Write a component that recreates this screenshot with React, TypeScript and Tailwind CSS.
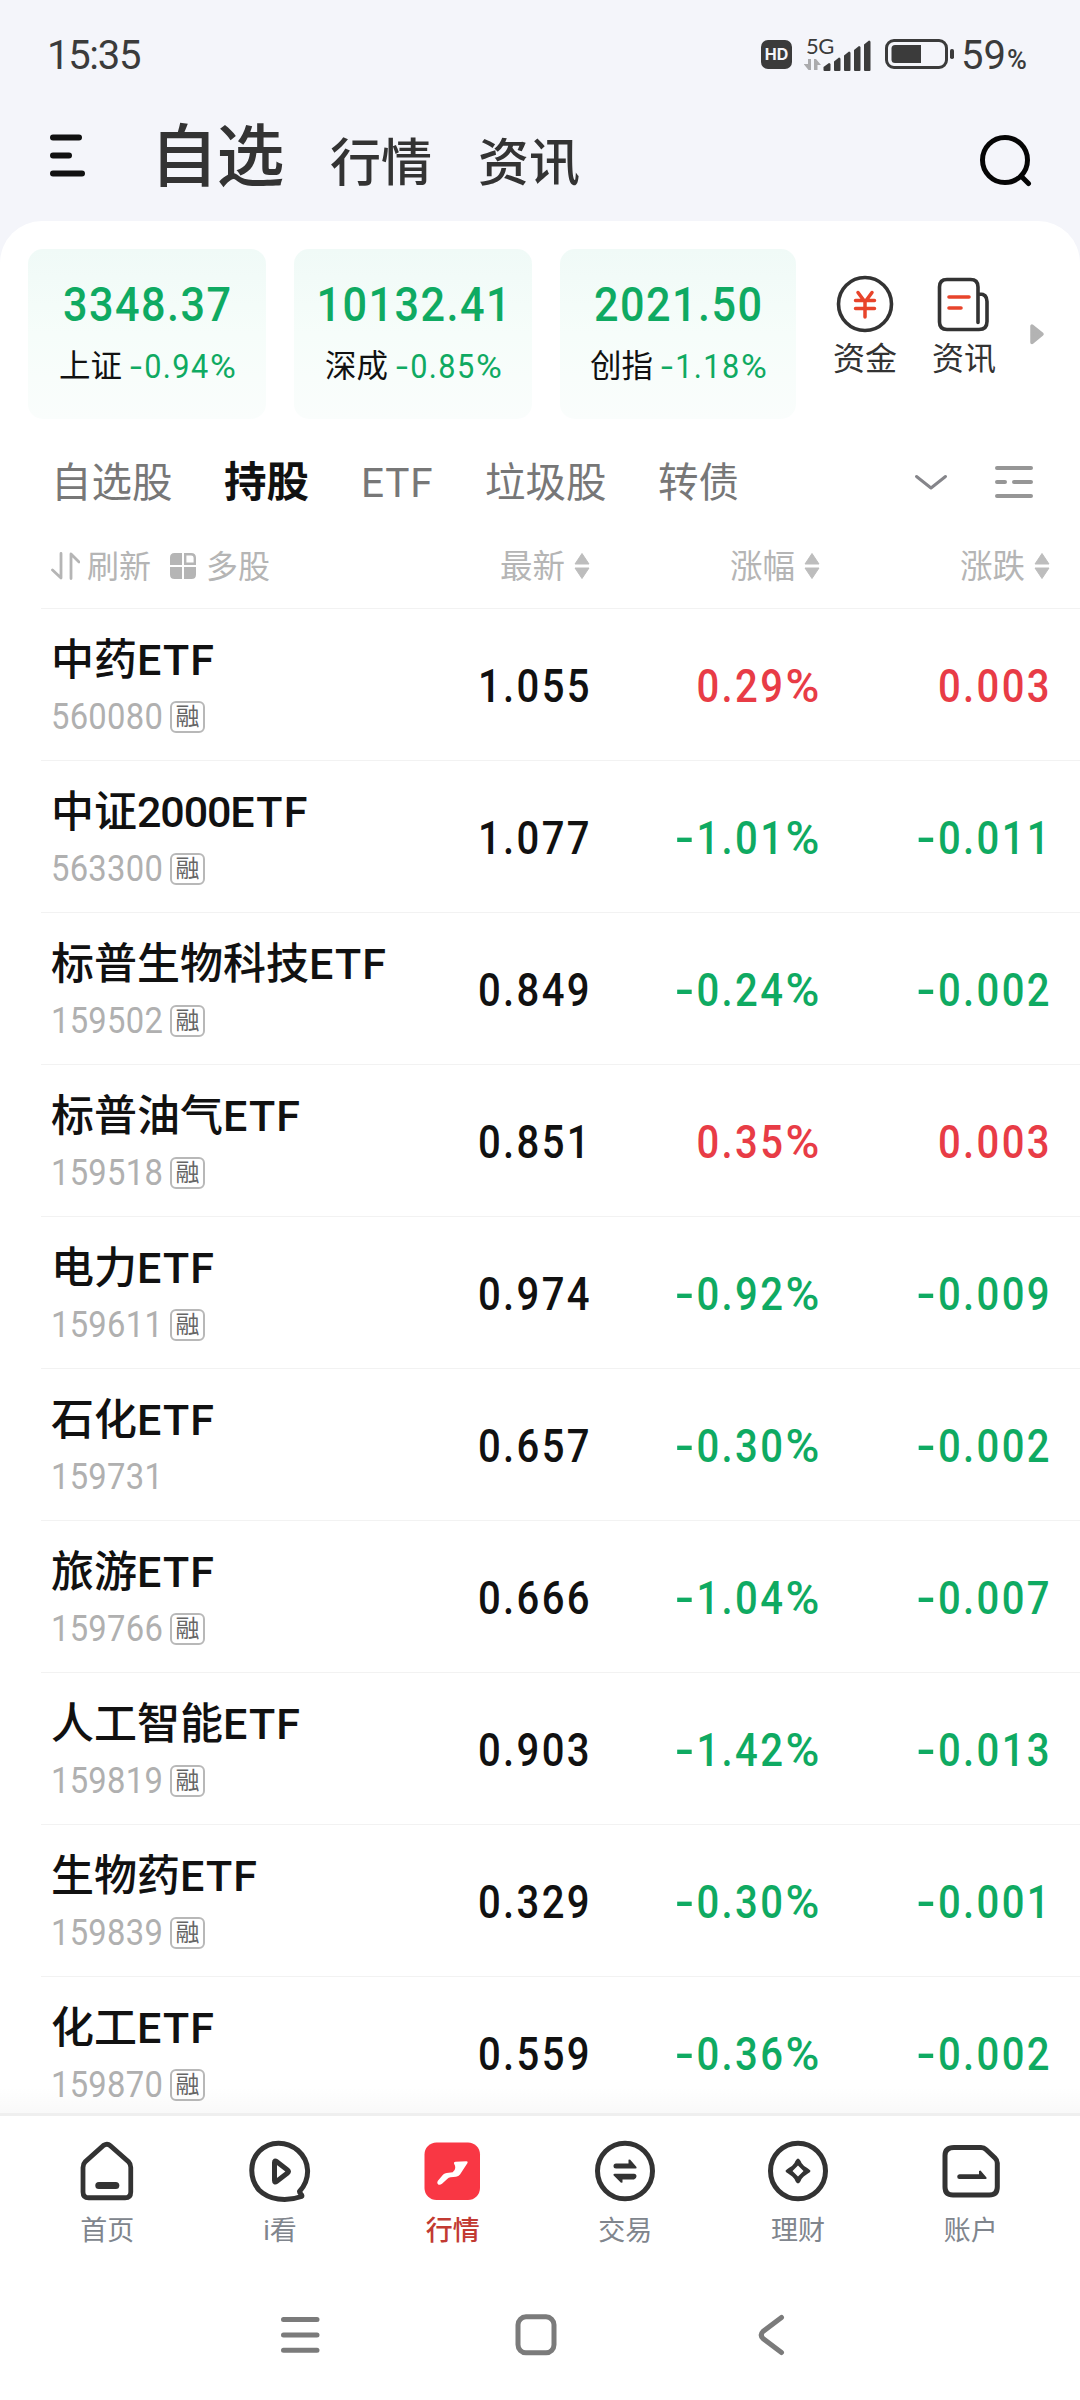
import React from "react";

const rows = [
  { name: "中药", latin: "ETF", code: "560080", margin: true, price: "1.055", pct: "0.29%", chg: "0.003" },
  { name: "中证", digits: "2000", latin: "ETF", code: "563300", margin: true, price: "1.077", pct: "-1.01%", chg: "-0.011" },
  { name: "标普生物科技", latin: "ETF", code: "159502", margin: true, price: "0.849", pct: "-0.24%", chg: "-0.002" },
  { name: "标普油气", latin: "ETF", code: "159518", margin: true, price: "0.851", pct: "0.35%", chg: "0.003" },
  { name: "电力", latin: "ETF", code: "159611", margin: true, price: "0.974", pct: "-0.92%", chg: "-0.009" },
  { name: "石化", latin: "ETF", code: "159731", margin: false, price: "0.657", pct: "-0.30%", chg: "-0.002" },
  { name: "旅游", latin: "ETF", code: "159766", margin: true, price: "0.666", pct: "-1.04%", chg: "-0.007" },
  { name: "人工智能", latin: "ETF", code: "159819", margin: true, price: "0.903", pct: "-1.42%", chg: "-0.013" },
  { name: "生物药", latin: "ETF", code: "159839", margin: true, price: "0.329", pct: "-0.30%", chg: "-0.001" },
  { name: "化工", latin: "ETF", code: "159870", margin: true, price: "0.559", pct: "-0.36%", chg: "-0.002" },
];

/* A figure whose minus and percent signs are drawn a little wider than the font's own. */
function Figure({ value }: { value: string }) {
  const negative = value.startsWith("-");
  const percent = value.endsWith("%");
  const body = value.replace("-", "").replace("%", "");
  return (
    <>
      {negative && <span className="mr-[0.14em] inline-block origin-left scale-x-[1.4]">-</span>}
      {body}
      {percent && <span className="ml-[0.12em] inline-block origin-right scale-x-[1.15]">%</span>}
    </>
  );
}

function StatusBar() {
  return (
    <div className="flex h-[108px] items-center pl-[47px] text-[#3b3b3b]">
      <span className="w-[714px] pt-[3px] text-[40px] leading-none tracking-[-1.300px]">15:35</span>
      <span className="flex h-[29px] w-[31px] items-center justify-center rounded-[7px] bg-[#3b3b3b] font-['Inter'] text-[16px] leading-none font-bold text-[#f4f5fa]">
        HD
      </span>
      <div className="relative ml-[12px] h-[36px] w-[68px]">
        <span className="absolute -top-[1px] left-[2px] font-['Lato'] text-[22px] leading-none tracking-[-0.5px]">5G</span>
        <svg className="absolute inset-0" width="68" height="36" viewBox="804 35 68 36">
          <g fill="#ababad">
            <path d="M808 58h3v11h-2.500l-5-6h4.500z" />
            <path d="M814 69V58h2l5 6h-3.500v5z" />
          </g>
          <g fill="#3b3b3b">
            <path d="M823.500 66l5.500-4q1.500 0 1.500 1.500v5.500q0 1-1 1h-5q-1 0-1-1z" />
            <path d="M834 60.500l5-4q1.500 0 1.500 1.500v11q0 1-1 1h-4.500q-1 0-1-1z" />
            <path d="M844 54.500l5-4q1.500 0 1.500 1.500v17q0 1-1 1h-4.500q-1 0-1-1z" />
            <path d="M854 49l5-4q1.500 0 1.500 1.500v22.500q0 1-1 1h-4.500q-1 0-1-1z" />
            <path d="M864 43.500l5-4q1.500 0 1.500 1.500v28q0 1-1 1h-4.500q-1 0-1-1z" />
          </g>
        </svg>
      </div>
      <svg className="ml-[13px]" width="70" height="32" viewBox="885 38 70 32">
        <rect x="886.500" y="40.500" width="60" height="27" rx="7.500" fill="none" stroke="#3b3b3b" strokeWidth="3" />
        <path d="M895 45h26v18h-26q-3.500 0-3.500-3.500v-11q0-3.500 3.500-3.500z" fill="#3b3b3b" />
        <rect x="950" y="49" width="4" height="10" rx="1.800" fill="#3b3b3b" />
      </svg>
      <span className="ml-[6px] pt-[3px] text-[40px] leading-none">59</span>
      <span className="mt-[12px] ml-[1px] text-[27px] leading-none font-medium">%</span>
    </div>
  );
}

function TopTabs() {
  return (
    <div className="flex h-[113px] items-start pl-[50px] text-[#333333]">
      <svg className="mt-[25px]" width="36" height="44" viewBox="50 133 36 44" stroke="#111111" strokeWidth="6" strokeLinecap="round">
        <path d="M53 137.500h26M53 155.500h16M53 173.500h29" />
      </svg>
      <span className="mt-[16px] ml-[64px] w-[177px] text-[68px] leading-none font-medium tracking-[-1.500px] whitespace-nowrap">自选</span>
      <span className="mt-[30px] ml-[3px] w-[148px] text-[51px] leading-none font-medium">行情</span>
      <span className="mt-[30px] w-[102px] text-[51px] leading-none font-medium">资讯</span>
      <svg className="mt-[25px] ml-[398px]" width="54" height="54" viewBox="978 133 54 54" fill="none" stroke="#050505" strokeWidth="5" strokeLinecap="round">
        <circle cx="1005" cy="160" r="22.500" />
        <path d="M1021 176l7.500 7.500" />
      </svg>
    </div>
  );
}

const indices = [
  { value: "3348.37", label: "上证", pct: "-0.94%" },
  { value: "10132.41", label: "深成", pct: "-0.85%" },
  { value: "2021.50", label: "创指", pct: "-1.18%" },
];

function IndexStrip() {
  return (
    <div className="flex h-[198px] pt-[28px] pl-[28px]">
      <div className="grid grid-cols-[238px_238px_236px] gap-[28px]">
        {indices.map((i) => (
          <div
            key={i.label}
            className="flex h-[170px] flex-col items-center rounded-[15px] bg-gradient-to-b from-[#f0faf7] via-[#f6fdfa] to-[#fafdfc] pt-[32px]"
          >
            <div className="scale-x-[0.9] pl-[1.800px] text-[48px] leading-[48px] font-medium tracking-[1.600px] text-[#0faa62]">{i.value}</div>
            <div className="mt-[22px] flex items-center leading-[32px] whitespace-nowrap">
              <span className="text-[31.500px] text-[#111111]">{i.label}</span>
              <span className="-mr-[10px] ml-[8px] origin-left scale-x-[0.93] text-[33px] tracking-[1.500px] text-[#0faa62]">
                <Figure value={i.pct} />
              </span>
            </div>
          </div>
        ))}
      </div>
      <div className="ml-[36px] flex w-[66px] flex-col items-center">
        <svg className="mt-[26px]" width="58" height="58" viewBox="836 275 58 58" fill="none">
          <circle cx="865" cy="304" r="26.500" stroke="#333333" strokeWidth="3.600" />
          <path d="M858 292.500l7 9.500l7-9.500M855.500 300.500h19M855.500 308.500h19M865 301v16" stroke="#e8442b" strokeWidth="3.500" strokeLinecap="round" strokeLinejoin="round" />
        </svg>
        <span className="mt-[10px] text-[32px] leading-[32px] text-[#333333]">资金</span>
      </div>
      <div className="ml-[33px] flex w-[66px] flex-col items-center">
        <svg className="mt-[26px]" width="58" height="58" viewBox="936 275 58 58" fill="none" strokeLinecap="round" strokeLinejoin="round">
          <path d="M979 322.500V287q0-7.500-7.500-7.500H948q-7.500 0-7.500 7.500v35q0 7.500 7.500 7.500h32q8 0 8-8v-20q0-7.500-7.500-7.500" stroke="#333333" strokeWidth="3.600" />
          <path d="M950 297h20M950 308h12" stroke="#e8442b" strokeWidth="3.600" />
        </svg>
        <span className="mt-[10px] text-[32px] leading-[32px] text-[#333333]">资讯</span>
      </div>
      <svg className="mt-[73px] ml-[32px]" width="18" height="24" viewBox="1030 322 18 24">
        <path d="M1033 326v16.500l10-8.300z" fill="#b3b3b3" stroke="#b3b3b3" strokeWidth="3.500" strokeLinejoin="round" />
      </svg>
    </div>
  );
}

function GroupTabs() {
  return (
    <div className="flex h-[126px] items-center pl-[51px] text-[40.500px] leading-none whitespace-nowrap text-[#777777]">
      <span className="w-[173px] pt-[3px]">自选股</span>
      <span className="w-[137px] pt-[3px] text-[42.500px] font-bold text-[#111111]">持股</span>
      <span className="w-[124px] pt-[3px] tracking-[0.800px]">ETF</span>
      <span className="w-[173px] pt-[3px]">垃圾股</span>
      <span className="w-[82px] pt-[3px]">转债</span>
      <svg className="ml-[173px]" width="36" height="20" viewBox="913 475 36 20" fill="none" stroke="#85858a" strokeWidth="3" strokeLinecap="round" strokeLinejoin="round">
        <path d="M916.500 479.500l14.500 11.500l14.500-11.500" />
      </svg>
      <svg className="ml-[45px]" width="40" height="36" viewBox="994 464 40 36" stroke="#969696" strokeWidth="4" strokeLinecap="round">
        <path d="M997 468h34M997 482h8M1014 482h17M997 496h34" />
      </svg>
    </div>
  );
}

function SortHeader({ label }: { label: string }) {
  return (
    <span className="flex items-center justify-end gap-[9px]">
      <span className="pt-[3px] text-[32.500px]">{label}</span>
      <svg width="16" height="28" viewBox="0 0 16 28" fill="#bdbdbd" stroke="#bdbdbd" strokeWidth="1" strokeLinejoin="round">
        <path d="M8 1.500l7 10.500H1zM8 26.500l7-10.500H1z" />
      </svg>
    </span>
  );
}

function ColumnHeader() {
  return (
    <div className="grid h-[63px] grid-cols-[540px_230px_230px] pr-[29px] pb-[22px] pl-[50px] text-[32px] leading-none text-[#b5b5b5]">
      <div className="flex items-center justify-between">
        <span className="flex items-center">
          <svg width="30" height="30" viewBox="50 550 30 30" fill="none" stroke="#b5b5b5" strokeWidth="2.800" strokeLinecap="round" strokeLinejoin="round">
            <path d="M61 552.500V577l-8.500-8M71 577.500V553l8 8" />
          </svg>
          <span className="ml-[7px] pt-[2px]">刷新</span>
          <svg className="ml-[19px]" width="26" height="26" viewBox="0 0 26 26" fill="#b5b5b5">
            <path d="M4.500 0h7.500v12H0V4.500Q0 0 4.500 0zM0 14h12v12H4.500Q0 26 0 21.500zM14 14h12v7.500q0 4.500-4.500 4.500H14z" />
            <path d="M15.200 1.200h6q3.600 0 3.600 3.600v6h-9.600z" fill="none" stroke="#b5b5b5" strokeWidth="2.400" />
          </svg>
          <span className="ml-[10px] pt-[2px]">多股</span>
        </span>
        <SortHeader label="最新" />
      </div>
      <SortHeader label="涨幅" />
      <SortHeader label="涨跌" />
    </div>
  );
}

function StockRow({ row }: { row: (typeof rows)[number] }) {
  const tone = row.pct.startsWith("-")
    ? "-mr-[2px] origin-right scale-x-[0.88] text-[#0faa62]"
    : "-mr-[2px] origin-right scale-x-[0.88] text-[#e83c46]";
  return (
    <div className="ml-[41px] flex h-[152px] shrink-0 border-t border-[#f2f2f2] pl-[10px]">
      <div className="w-[340px] pt-[29px]">
        <div className="text-[43px] leading-[44px] font-medium whitespace-nowrap text-[#111111]">
          {row.name}
          {row.digits && <span className="tracking-[-1.100px]">{row.digits}</span>}
          <span className="tracking-[1.200px]">{row.latin}</span>
        </div>
        <div className="mt-[18px] flex h-[33px] items-center">
          <span className="w-[119px] origin-left scale-x-[0.91] text-[36px] leading-none tracking-[0.300px] text-[#b0b0b0]">{row.code}</span>
          {row.margin && (
            <span className="flex h-[32px] w-[35px] items-center justify-center rounded-[6px] border-2 border-[#b8b8b8] text-[24px] leading-none text-[#666666]">
              融
            </span>
          )}
        </div>
      </div>
      <div className="grid h-[152px] w-[659px] grid-cols-[199px_230px_230px] items-center pt-[3px] text-right text-[45.500px] leading-none font-medium tracking-[2.700px]">
        <span className="-mr-[2px] origin-right scale-x-[0.88] text-[#111111]">{row.price}</span>
        <span className={tone}>
          <Figure value={row.pct} />
        </span>
        <span className={tone}>
          <Figure value={row.chg} />
        </span>
      </div>
    </div>
  );
}

const navItems = [
  {
    label: "首页",
    icon: (
      <g>
        <path d="M28 6.500q4-2.500 7 .3L54 23q2.500 2.500 2.500 6v25q0 6-6 6H12.500q-6 0-6-6V29q0-3.500 2.500-6z" transform="translate(1.800 0) scale(.955 .98)" />
        <path d="M23.800 46.500h17" strokeWidth="7" />
      </g>
    ),
  },
  {
    label: "i看",
    icon: (
      <g>
        <path d="M51.500 52.500C63 40 62 22 50 11.500C38.500 1.500 22 1.700 11.500 12C1 22.500 1.500 40 11 51C21 61 38 63 53.500 57.500C55 56.500 51.500 54.500 51.500 52.500z" />
        <path d="M26.500 23.500v18q0 2.500 2 1l11-8.500q2-1.500 0-3l-11-8.500q-2-1.500-2 1z" />
      </g>
    ),
  },
  {
    label: "行情",
    active: true,
    icon: (
      <g stroke="none">
        <rect x="3.500" y="3.500" width="55.500" height="57.500" rx="12" fill="#f93744" />
        <path d="M33 24.500q-.5-1.800 1.500-1.800L45.500 22.300q1.800 0 1 1.700L39 35.500q-1.500 2-4 2.200l-5.500.5q-2 .3-3 1.500l-5.500 5Q19 46.500 17.200 45.500q-1.700-1.500-.5-3.500l5.500-6.500q1.500-1.500 3.500-1.500l6-.7q4.500-3.500 1.300-8.800z" fill="#ffffff" />
      </g>
    ),
  },
  {
    label: "交易",
    icon: (
      <g>
        <ellipse cx="32" cy="32" rx="27.500" ry="27.800" />
        <g fill="#333333" stroke="none">
          <path d="M23 24.500h12.500v-3.700l1.500-.3l6.500 7.500q.5 1.500-1 1.500H23q-2.500 0-2.500-2.500T23 24.500z" />
          <path d="M41 40.500H29.500v3l-1.500.3l-7.500-7.500q-.5-1.500 1-1.500H41q2.500 0 2.500 2.500T41 40.500z" />
        </g>
      </g>
    ),
  },
  {
    label: "理财",
    icon: (
      <g>
        <ellipse cx="32" cy="32" rx="27.500" ry="27.800" />
        <path d="M32 19.500Q34 20 35.500 24Q37.500 27 40.500 28.500Q44.500 31 44.500 32Q44.500 33 40.500 35.500Q37.500 37 35.500 40Q34 44 32 44.500Q30 44 28.500 40Q26.500 37 23.500 35.500Q19.500 33 19.500 32Q19.500 31 23.500 28.500Q26.500 27 28.500 24Q30 20 32 19.500zM32 26.500L26.500 32L32 37.500L37.500 32z" fill="#333333" fillRule="evenodd" stroke="none" />
      </g>
    ),
  },
  {
    label: "账户",
    icon: (
      <g>
        <path d="M15 8.500H42q3 0 5 2l9 8.500q2.300 2.200 2.300 5v24q0 8-8 8H14q-8 0-8-8V16.500q0-8 9-8z" />
        <path d="M20.500 35.300h19.500v-3.300l1.500-.5l6 7q.5 1.500-1 1.500H20.500q-2.300 0-2.300-2.300t2.300-2.400z" fill="#333333" stroke="none" />
      </g>
    ),
  },
];

function BottomNav() {
  return (
    <nav className="grid h-[157px] shrink-0 grid-cols-6 border-t-[3px] border-[#efefef] bg-white pr-[23px] pl-[21px]">
      {navItems.map((n) => (
        <div key={n.label} className="flex flex-col items-center">
          <svg className="mt-[23px] shrink-0" width="64" height="64" viewBox="0 0 64 64" fill="none" stroke="#333333" strokeWidth="5" strokeLinecap="round" strokeLinejoin="round">
            {n.icon}
          </svg>
          <span className={n.active ? "mt-[14px] text-[27px] leading-[28px] font-medium text-[#c23a32]" : "mt-[14px] text-[27px] leading-[28px] text-[#80858d]"}>
            {n.label}
          </span>
        </div>
      ))}
    </nav>
  );
}

function SystemNav() {
  return (
    <div className="flex h-[130px] shrink-0 items-center bg-white pl-[280px]">
      <svg width="40" height="44" viewBox="280 2313 40 44" stroke="#7b7b7b" strokeWidth="5" strokeLinecap="round">
        <path d="M283.500 2319.500h33.500M283.500 2335h33.500M283.500 2350.300h33.500" />
      </svg>
      <svg className="ml-[194px]" width="44" height="44" viewBox="514 2313 44 44" fill="none" stroke="#7b7b7b" strokeWidth="5">
        <rect x="518" y="2316.800" width="36" height="36" rx="8" />
      </svg>
      <svg className="ml-[200px]" width="30" height="44" viewBox="758 2313 30 44" fill="none" stroke="#7b7b7b" strokeWidth="5" strokeLinecap="round">
        <path d="M781.500 2317.500L763 2331.500q-3.500 3.500 0 7L781.500 2352.500" />
      </svg>
    </div>
  );
}

export default function App() {
  return (
    <div className="flex h-[2400px] w-[1080px] flex-col overflow-hidden bg-[#f4f5fa] font-['Roboto','Noto_Sans_CJK_SC',sans-serif]">
      <StatusBar />
      <TopTabs />
      <main className="flex h-[1892px] shrink-0 flex-col overflow-hidden rounded-t-[42px] bg-white">
        <IndexStrip />
        <GroupTabs />
        <ColumnHeader />
        <div className="relative flex min-h-0 flex-1 flex-col overflow-hidden">
          {rows.map((r) => (
            <StockRow key={r.code} row={r} />
          ))}
          <div className="pointer-events-none absolute inset-x-0 bottom-0 h-[26px] bg-gradient-to-b from-transparent to-black/[0.025]" />
        </div>
      </main>
      <BottomNav />
      <SystemNav />
    </div>
  );
}
